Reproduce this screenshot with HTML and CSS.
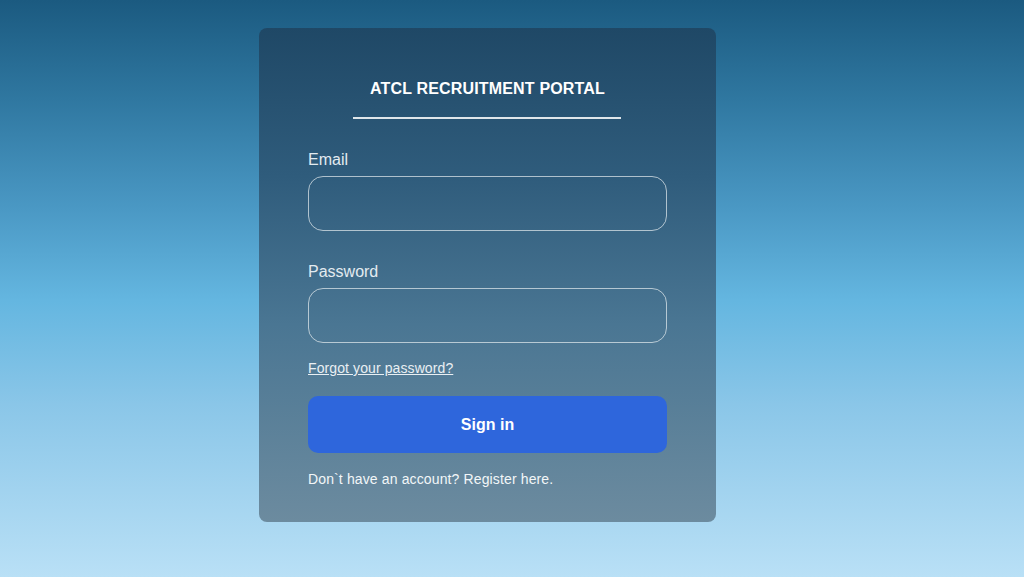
FILE: index.html
```html
<!DOCTYPE html>
<html lang="en">
<head>
<meta charset="utf-8">
<title>ATCL Recruitment Portal</title>
<link rel="stylesheet" href="styles.css">
</head>
<body>
<main class="page">
  <form class="card">
    <h1 class="title">ATCL RECRUITMENT PORTAL</h1>
    <div class="rule"></div>
    <label class="label" for="email">Email</label>
    <input class="field" id="email" type="email">
    <label class="label label-second" for="password">Password</label>
    <input class="field" id="password" type="password">
    <a class="forgot" href="#">Forgot your password?</a>
    <button class="btn" type="button">Sign in</button>
    <p class="register">Don`t have an account? Register here.</p>
  </form>
</main>
</body>
</html>
```
FILE: styles.css
```css
* { box-sizing: border-box; }
html, body { margin: 0; padding: 0; height: 100%; }
body {
  font-family: "Liberation Sans", Arial, sans-serif;
  background: linear-gradient(180deg, #1b5a80 0%, #2f77a0 17%, #4a98c4 36%, #64b6e0 52%, #8ac6e8 70%, #b9e0f6 100%);
  overflow: hidden;
}
.page {
  height: 577px;
  padding: 28px 0 0 259px;
}
.card {
  width: 457px;
  height: 494px;
  border-radius: 8px;
  background: linear-gradient(180deg, #1f4866 0%, #2f5c7c 30%, #4a7693 60%, #6c8b9f 100%);
  padding: 51px 49px 0 49px;
  display: flex;
  flex-direction: column;
}
.title {
  margin: 0;
  font-size: 16px;
  line-height: 20px;
  font-weight: bold;
  color: #ffffff;
  text-align: center;
  letter-spacing: 0.17px;
}
.rule {
  width: 268px;
  height: 2px;
  background: #dfe6ea;
  margin: 18px 0 0 45px;
}
.label {
  display: block;
  font-size: 16px;
  line-height: 20px;
  color: #e3ebf0;
  margin-top: 31px;
}
.label-second { margin-top: 31px; }
.field {
  display: block;
  width: 359px;
  height: 55px;
  margin-top: 6px;
  border: 1px solid rgba(230, 236, 240, 0.7);
  border-radius: 15px;
  background: transparent;
  outline: none;
}
.forgot {
  display: block;
  align-self: flex-start;
  margin-top: 16px;
  font-size: 14px;
  line-height: 18px;
  color: #e9eff3;
  text-decoration: underline;
  letter-spacing: 0.1px;
}
.btn {
  display: block;
  width: 359px;
  height: 57px;
  margin-top: 19px;
  border: none;
  border-radius: 10px;
  background: #2e66dc;
  color: #ffffff;
  font-family: "Liberation Sans", Arial, sans-serif;
  font-size: 16px;
  font-weight: bold;
}
.register {
  margin: 17px 0 0 0;
  font-size: 14px;
  line-height: 18px;
  color: #f2f6f8;
  letter-spacing: 0.13px;
}
```
